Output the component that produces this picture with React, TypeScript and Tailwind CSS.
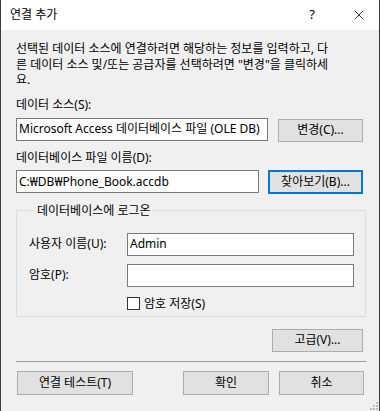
import { X } from "lucide-react";

const font = { fontFamily: '"Noto Sans", "Noto Sans CJK KR", sans-serif' };

function Btn({ label, className = "", focused = false }: { label: string; className?: string; focused?: boolean }) {
  return (
    <button
      className={
        "flex h-[23px] items-center justify-center bg-[#e1e1e1] text-[12px] leading-none text-black " +
        (focused ? "border-2 border-[#0078d7] " : "border border-[#adadad] ") +
        className
      }
    >
      {label}
    </button>
  );
}

function Field({ value, className = "" }: { value?: string; className?: string }) {
  return (
    <div
      className={
        "flex h-[23px] items-center border border-[#7a7a7a] bg-white px-[2px] text-[12px] leading-none whitespace-nowrap overflow-hidden " +
        className
      }
    >
      {value}
    </div>
  );
}

export default function App() {
  return (
    <div
      className="flex h-[411px] w-[380px] flex-col border-x border-[#3a3a3a] bg-[#f0f0f0] text-black"
      style={font}
    >
      {/* Title bar */}
      <div className="flex h-[30px] shrink-0 items-center bg-white pl-[9px] text-[12px]">
        <span>연결 추가</span>
        <span className="ml-auto mr-[36px] text-[13px]">?</span>
        <X className="mr-[12px] h-[16px] w-[16px] text-black" strokeWidth={1.2} />
      </div>

      <div className="flex flex-1 flex-col px-[15px]">
        {/* Description */}
        <p className="mt-[11px] text-[12px] leading-[15.5px]">
          선택된 데이터 소스에 연결하려면 해당하는 정보를 입력하고, 다
          <br />
          른 데이터 소스 및/또는 공급자를 선택하려면 "변경"을 클릭하세
          <br />
          요.
        </p>

        {/* Data source */}
        <div className="mt-[9px] text-[12px] leading-[16px]">데이터 소스(S):</div>
        <div className="mt-[5px] flex items-start">
          <Field value="Microsoft Access 데이터베이스 파일 (OLE DB)" className="w-[252px] bg-[#f0f0f0]" />
          <Btn label="변경(C)..." className="ml-[10px] mt-[1px] w-[85px]" />
        </div>

        {/* File name */}
        <div className="mt-[8px] text-[12px] leading-[16px]">데이터베이스 파일 이름(D):</div>
        <div className="mt-[4px] flex items-center">
          <Field value="C:₩DB₩Phone_Book.accdb" className="h-[22px] w-[243px]" />
          <Btn label="찾아보기(B)..." focused className="ml-[9px] h-[24px] w-[95px]" />
        </div>

        {/* Logon group */}
        <fieldset className="mt-[9px] h-[114px] w-[350px] border border-[#dcdcdc] pl-[12px] pr-[10px]">
          <legend className="ml-[6px] px-[2px] text-[12px] leading-[16px]">데이터베이스에 로그온</legend>
          <div className="mt-[14px] flex items-center">
            <span className="w-[98px] text-[12px]">사용자 이름(U):</span>
            <Field value="Admin" className="h-[22px] w-[227px]" />
          </div>
          <div className="mt-[8px] flex items-center">
            <span className="w-[98px] text-[12px]">암호(P):</span>
            <Field className="h-[22px] w-[227px]" />
          </div>
          <label className="ml-[98px] mt-[8px] flex items-center gap-[4px] text-[12px]">
            <span className="h-[13px] w-[13px] border border-[#333] bg-white" />
            암호 저장(S)
          </label>
        </fieldset>

        {/* Advanced */}
        <div className="mt-[12px] flex justify-end pr-[1px]">
          <Btn label="고급(V)..." className="w-[91px]" />
        </div>

        {/* Separator */}
        <div className="mt-[9px] h-[1px] w-[350px] bg-[#a0a0a0]" />

        {/* Bottom buttons */}
        <div className="mt-[9px] flex items-center">
          <Btn label="연결 테스트(T)" className="ml-[1px] h-[24px] w-[116px]" />
          <Btn label="확인" className="ml-[50px] h-[24px] w-[86px]" />
          <Btn label="취소" className="ml-[10px] h-[24px] w-[85px]" />
        </div>
      </div>

      {/* Size grip */}
      <div className="relative">
        <svg className="absolute bottom-[1px] right-[1px]" width="10" height="10" viewBox="0 0 10 10">
          {[
            [8, 2],
            [8, 5],
            [5, 5],
            [8, 8],
            [5, 8],
            [2, 8],
          ].map(([x, y], i) => (
            <rect key={i} x={x} y={y} width="2" height="2" fill="#bcbcbc" />
          ))}
        </svg>
      </div>
    </div>
  );
}
